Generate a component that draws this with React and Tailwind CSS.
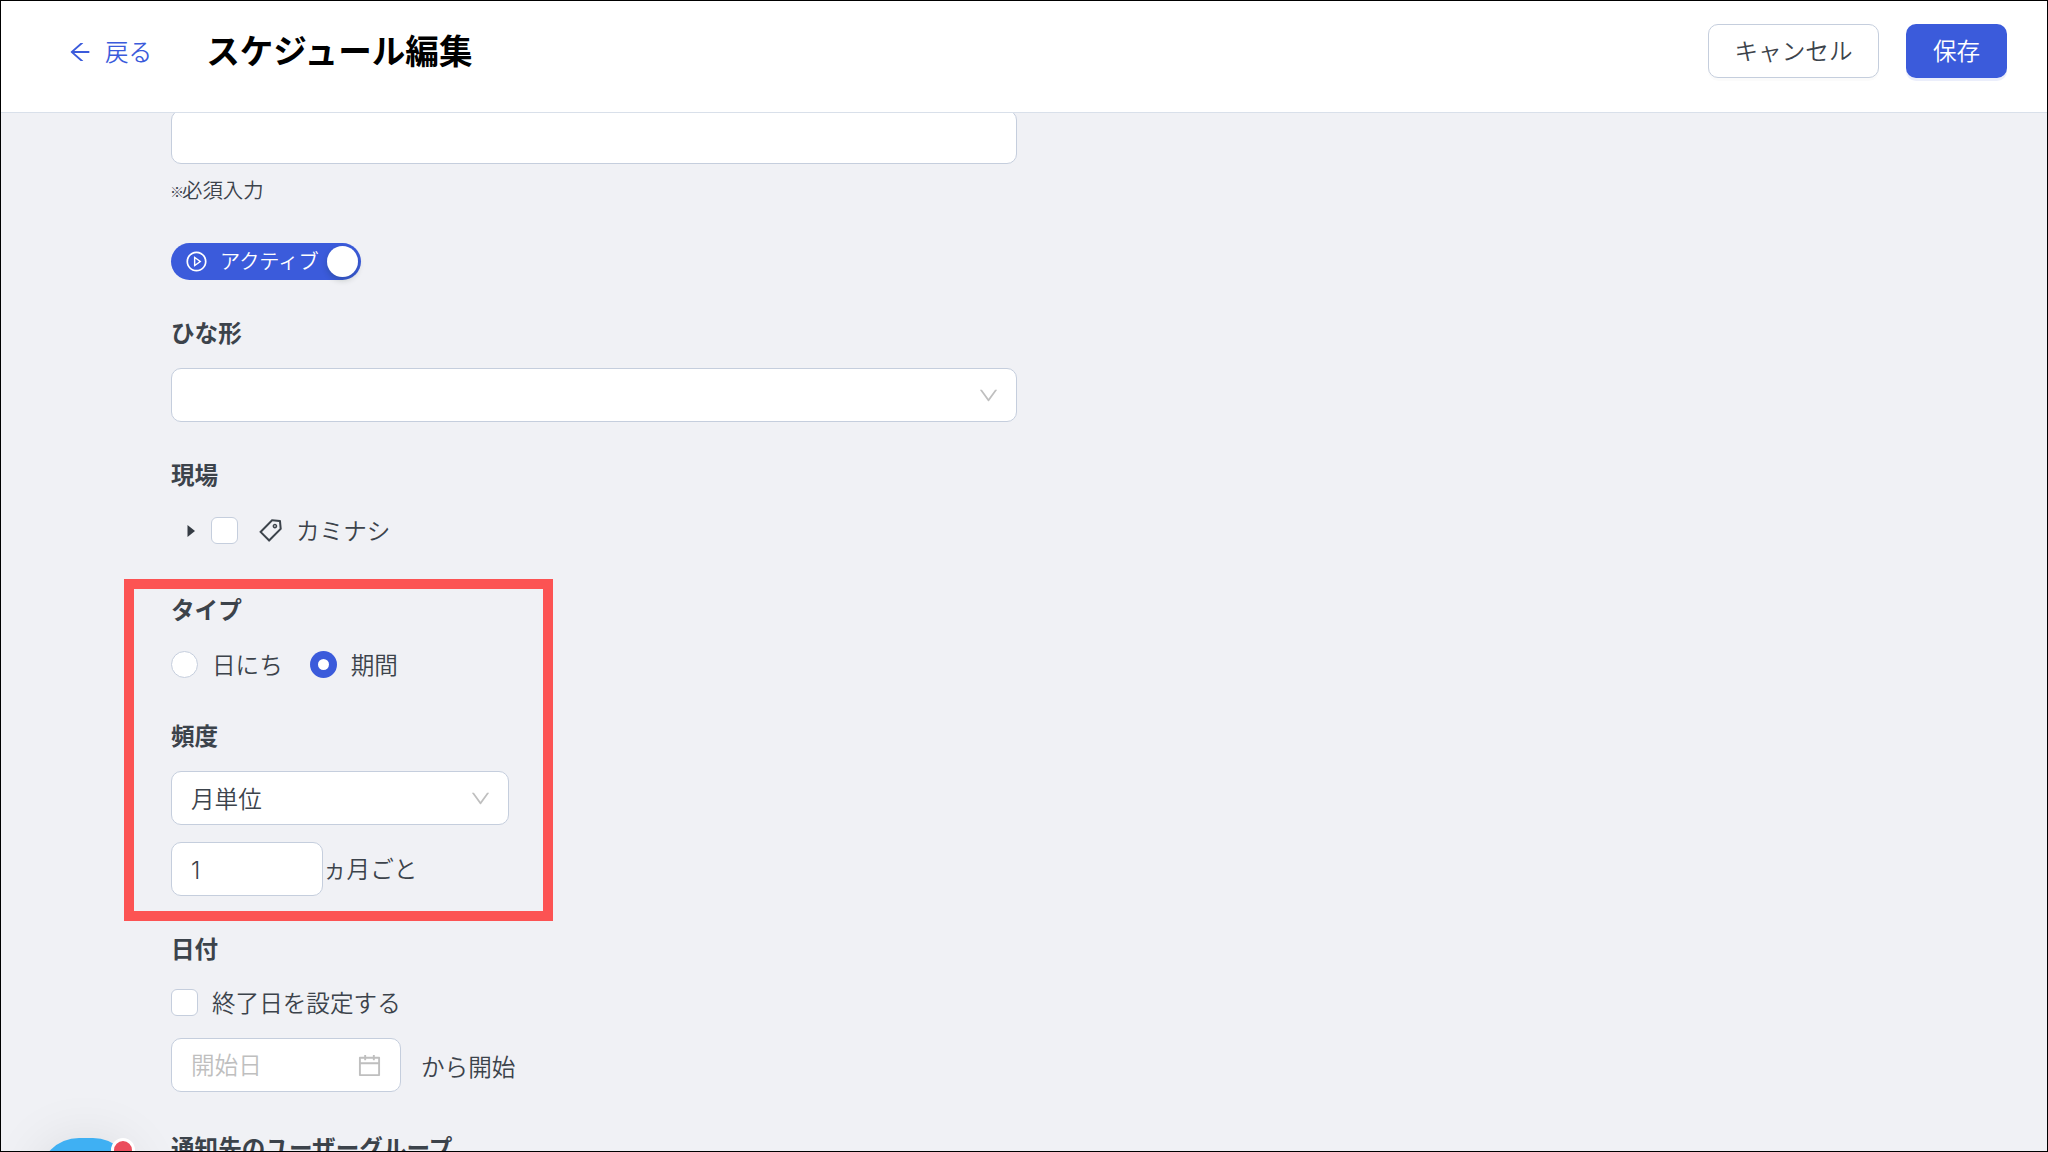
import {
  AiOutlineArrowLeft,
  AiOutlineCalendar,
  AiOutlineDown,
  AiOutlinePlayCircle,
  AiOutlineTag,
} from "react-icons/ai";

function Label({ className = "", children }) {
  return (
    <h2 className={`h-9 leading-[34px] font-bold text-[#3c434b] ${className}`}>{children}</h2>
  );
}

function Checkbox() {
  return <span className="size-[27px] shrink-0 rounded-md border border-[#c5cedd] bg-white" />;
}

function Radio({ checked, children }) {
  return (
    <label className="flex h-[27px] items-center">
      {checked ? (
        <span className="flex size-[27px] items-center justify-center rounded-full bg-[#3b5bdb]">
          <span className="size-[11px] rounded-full bg-white" />
        </span>
      ) : (
        <span className="size-[27px] rounded-full border border-[#c5cedd] bg-white" />
      )}
      <span className="ml-[14px]">{children}</span>
    </label>
  );
}

function Select({ className = "", children }) {
  return (
    <div className={`flex h-[54px] items-center justify-between rounded-[10px] border border-[#c5cedd] bg-white pr-4 pl-[19px] ${className}`}>
      <span className="mt-px">{children}</span>
      <AiOutlineDown className="size-[23px] text-[#bfbfbf]" />
    </div>
  );
}

function Header() {
  return (
    <header className="flex h-28 shrink-0 items-start justify-between border-b border-[#d9e0ea] bg-white pt-[23px] pr-10 pl-[66px]">
      <div className="flex h-[54px] items-center">
        <a className="mt-0.5 flex items-center text-[#3b5bdb]">
          <AiOutlineArrowLeft className="size-[26px]" />
          <span className="ml-3">戻る</span>
        </a>
        <h1 className="-mt-[3px] ml-[54px] text-[33.6px] leading-none font-bold text-black">スケジュール編集</h1>
      </div>
      <div className="flex gap-[27px]">
        <button className="h-[54px] w-[171px] rounded-[10px] border border-[#c5cedd] bg-white shadow-[0_3px_0_rgba(0,0,0,0.016)]">
          キャンセル
        </button>
        <button className="h-[54px] w-[101px] rounded-[10px] bg-[#3b5bdb] text-white shadow-[0_3px_0_rgba(59,91,219,0.1)]">
          保存
        </button>
      </div>
    </header>
  );
}

function FrequencySection() {
  return (
    <section className="relative mt-[47px]">
      <Label>タイプ</Label>
      <div className="mt-[23px] flex h-7 gap-[27px]">
        <Radio>日にち</Radio>
        <Radio checked>期間</Radio>
      </div>
      <Label className="mt-[39px]">頻度</Label>
      <Select className="mt-[17px] w-[338px]">月単位</Select>
      <div className="mt-[17px] flex h-[54px] items-center">
        <input
          defaultValue="1"
          className="h-[54px] w-[152px] rounded-[10px] border border-[#c5cedd] bg-white px-[19px] pt-0.5 font-['Inter',sans-serif]"
        />
        <span>ヵ月ごと</span>
      </div>
      {/* highlight frame */}
      <div className="pointer-events-none absolute -top-[13px] -left-[47px] h-[342px] w-[429px] border-10 border-[#fc5353]" />
    </section>
  );
}

export default function App() {
  return (
    <div className="relative flex h-[1152px] w-[2048px] flex-col overflow-hidden border border-black bg-[#f0f1f5] font-['Noto_Sans_CJK_JP',sans-serif] text-[23.6px] font-[350] text-[#3c434b]">
      <Header />
      <main className="min-h-0 flex-1 overflow-hidden pl-[170px]">
        <div className="-mt-[3px] flex flex-col">
          <input className="h-[54px] w-[846px] rounded-[10px] border border-[#c5cedd] bg-white px-5" />
          <p className="mt-[14px] flex h-6 items-center text-[20.4px] leading-[22px]">
            <span className="mt-0.5 -mr-0.5 -ml-px text-[14px] font-bold">※</span>
            <span className="-mt-0.5">必須入力</span>
          </p>

          <div className="mt-[41px] flex h-[37px] w-[190px] items-center rounded-full bg-[#3b5bdb] pr-[3px] pl-[14px] text-[20.2px] text-white">
            <AiOutlinePlayCircle className="size-[23px] shrink-0" />
            <span className="mb-px ml-3 whitespace-nowrap">アクティブ</span>
            <span className="ml-auto size-[31px] shrink-0 rounded-full bg-white shadow-[0_3px_6px_rgba(0,35,11,0.2)]" />
          </div>

          <Label className="mt-[35px]">ひな形</Label>
          <Select className="mt-[17px] w-[846px]" />

          <Label className="mt-[35px]">現場</Label>
          <div className="mt-6 mb-px flex h-[27px] items-center">
            <svg viewBox="0 0 8 12" className="ml-4 h-3 w-2 fill-[#343b43]">
              <path d="M0.500 0 8 6 0.500 12z" />
            </svg>
            <span className="ml-4 flex">
              <Checkbox />
            </span>
            <AiOutlineTag className="ml-[19px] size-[27px]" />
            <span className="ml-3">カミナシ</span>
          </div>

          <FrequencySection />

          <Label className="mt-[35px]">日付</Label>
          <label className="mt-[22px] mb-px flex h-[27px] items-center">
            <Checkbox />
            <span className="ml-[14px]">終了日を設定する</span>
          </label>
          <div className="mt-[21px] flex h-[54px] items-center">
            <div className="flex h-[54px] w-[230px] items-center justify-between rounded-[10px] border border-[#c5cedd] bg-white pr-[17px] pl-[19px] text-[#bfbfbf]">
              <span>開始日</span>
              <AiOutlineCalendar className="size-[27px]" />
            </div>
            <span className="mt-[3px] ml-5">から開始</span>
          </div>

          <Label className="mt-[38px]">通知先のユーザーグループ</Label>
        </div>
      </main>

      {/* chat launcher, mostly below the fold */}
      <div className="absolute top-[1137px] left-[38px] h-[94px] w-[94px] rounded-[40px] bg-[#3fb0f3] shadow-[0_4px_56px_rgba(0,0,0,0.1)]">
        <span className="absolute top-0 left-[72px] size-6 rounded-full border-3 border-white bg-[#eb4d5c]" />
      </div>
    </div>
  );
}
